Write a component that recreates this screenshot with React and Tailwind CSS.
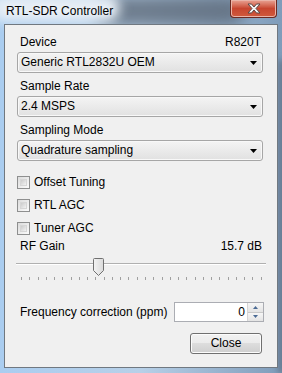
import React from 'react';

const font = { fontFamily: '"Liberation Sans", Arial, sans-serif' };

function Combo({ value }) {
  return (
    <div className="h-[21px] rounded-[3px] border border-[#a6a6a6] bg-gradient-to-b from-[#f4f4f4] to-[#e1e1e1] flex items-center pl-[3px] pr-[5px] shadow-[inset_0_0_0_1px_#f8f8f8]">
      <span className="flex-1 text-[12px] leading-[15px] text-black">{value}</span>
      <svg width="7" height="4" viewBox="0 0 7 4">
        <path d="M0 0h7L3.5 4z" fill="#000" />
      </svg>
    </div>
  );
}

function Check({ label }) {
  return (
    <div className="h-[23px] flex items-center">
      <div className="w-[13px] h-[13px] border border-[#8e8f8f] bg-gradient-to-br from-[#dcdcdc] to-[#fbfbfb] p-[2px]">
        <div className="w-full h-full border border-[#d6d6d6] bg-gradient-to-br from-[#cbcbcb] to-[#f2f2f2]" />
      </div>
      <span className="ml-[4px] text-[12px] leading-[15px] text-black">{label}</span>
    </div>
  );
}

function Slider() {
  const ticks = Array.from({ length: 30 });
  return (
    <div className="relative h-[28px] ml-[-1px] mr-[-3px]">
      <div className="absolute left-0 right-0 top-[9px] h-[2px] border-t border-[#b0b0b0] border-b border-b-white bg-[#e7e7e7]" />
      <div className="absolute left-[5px] right-[4px] top-[23px] h-[3px] flex justify-between">
        {ticks.map((_, i) => (
          <div key={i} className="w-px h-[3px] bg-[#a0a0a0]" />
        ))}
      </div>
      <svg className="absolute left-[77px] top-[4px]" width="11" height="18" viewBox="0 0 11 18">
        <defs>
          <linearGradient id="th" x1="0" x2="1" y1="0" y2="0">
            <stop offset="0" stopColor="#f3f3f3" />
            <stop offset="1" stopColor="#dadada" />
          </linearGradient>
        </defs>
        <path d="M1.5 0.5h8a1 1 0 0 1 1 1v11l-5 5l-5-5v-11a1 1 0 0 1 1-1z" fill="url(#th)" stroke="#707070" />
      </svg>
    </div>
  );
}

export default function App() {
  return (
    <div
      className="relative w-[282px] h-[373px] overflow-hidden bg-gradient-to-r from-[#aacdf0] via-[#b7d0e8] to-[#7f9cba]"
      style={font}
    >
      {/* glass blur */}
      <div className="absolute left-[95px] top-[-4px] w-[150px] h-[30px] rounded-full bg-[#5b6776] blur-[8px] opacity-80" />
      <div className="absolute left-[-10px] top-[-6px] w-[130px] h-[28px] rounded-full bg-[#e4ecf4] blur-[6px]" />
      <div className="absolute right-[-4px] top-[60px] w-[8px] h-[313px] bg-[#64788e] blur-[3px]" />

      {/* title bar */}
      <div className="relative h-[24px] flex items-start">
        <span className="pl-[6px] pt-[4px] text-[12px] leading-[14px] text-black [text-shadow:0_0_6px_#fff]">
          RTL-SDR Controller
        </span>
        <div className="absolute left-[230px] top-0 w-[47px] h-[18px] rounded-b-[4px] border border-t-0 border-[#6b2a22] bg-gradient-to-b from-[#e8a394] via-[#c7452f] to-[#d05a3c] shadow-[inset_0_0_0_1px_#eab4a8] flex items-center justify-center">
          <svg width="14" height="11" viewBox="0 0 14 11">
            <path d="M1 1h3.5l2.5 3l2.5-3h3.5l-4 4.5l4 4.5h-3.5l-2.5-3l-2.5 3h-3.5l4-4.5z" fill="#f4f4f4" stroke="#5a4a48" strokeWidth="1" />
          </svg>
        </div>
      </div>

      {/* client area */}
      <div className="relative mx-[4px] h-[344px] border border-[#707880] bg-[#f0f0f0] pt-[10px] pl-[12px] pr-[14px]">
        <div className="h-[15px] flex justify-between pl-[3px] pr-[2px] text-[12px] leading-[15px] text-black">
          <span>Device</span>
          <span>R820T</span>
        </div>
        <div className="mt-[2px]">
          <Combo value="Generic RTL2832U OEM" />
        </div>

        <div className="mt-[6px] h-[15px] pl-[3px] text-[12px] leading-[15px] text-black">Sample Rate</div>
        <div className="mt-[2px]">
          <Combo value="2.4 MSPS" />
        </div>

        <div className="mt-[6px] h-[15px] pl-[3px] text-[12px] leading-[15px] text-black">Sampling Mode</div>
        <div className="mt-[2px]">
          <Combo value="Quadrature sampling" />
        </div>

        <div className="mt-[10px]">
          <Check label="Offset Tuning" />
          <Check label="RTL AGC" />
          <Check label="Tuner AGC" />
        </div>

        <div className="mt-[-1px] h-[15px] flex justify-between pl-[3px] pr-[1px] text-[12px] leading-[15px] text-black">
          <span>RF Gain</span>
          <span>15.7 dB</span>
        </div>
        <Slider />

        <div className="mt-[20px] flex items-center h-[20px]">
          <span className="pl-[3px] flex-1 text-[12px] leading-[15px] text-black">Frequency correction (ppm)</span>
          <div className="mr-[-1px] w-[90px] h-[20px] border border-[#abadb3] bg-white flex">
            <span className="flex-1 text-right pr-[2px] text-[12px] leading-[18px] text-black">0</span>
            <div className="w-[16px] flex flex-col border-l border-[#d5d5d5]">
              <div className="flex-1 flex items-center justify-center bg-gradient-to-b from-[#f6f6f6] to-[#e4e4e4] border-b border-[#c9c9c9]">
                <svg width="5" height="3" viewBox="0 0 5 3"><path d="M0 3h5L2.5 0z" fill="#4a6a94" /></svg>
              </div>
              <div className="flex-1 flex items-center justify-center bg-gradient-to-b from-[#f6f6f6] to-[#e4e4e4]">
                <svg width="5" height="3" viewBox="0 0 5 3"><path d="M0 0h5L2.5 3z" fill="#4a6a94" /></svg>
              </div>
            </div>
          </div>
        </div>

        <div className="mt-[11px] flex justify-end pr-[1px]">
          <button className="w-[72px] h-[21px] rounded-[3px] border border-[#707070] bg-[linear-gradient(#f2f2f2_0%,#ebebeb_50%,#dddddd_50%,#cfcfcf_100%)] shadow-[inset_0_0_0_1px_#fcfcfc] text-[12px] leading-[15px] text-black">
            Close
          </button>
        </div>
      </div>
    </div>
  );
}
